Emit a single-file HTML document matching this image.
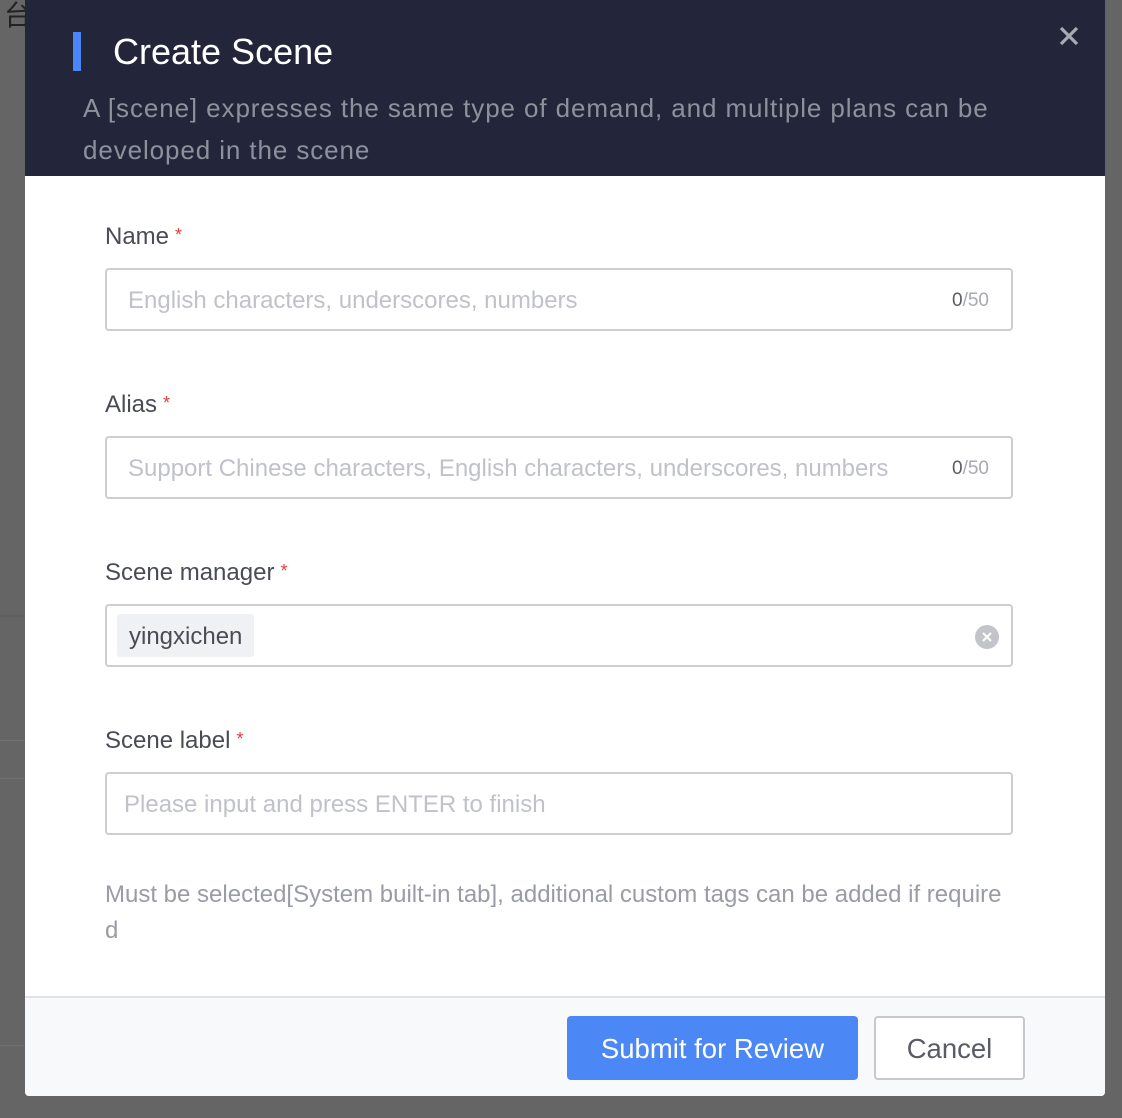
<!DOCTYPE html>
<html><head><meta charset="utf-8"><style>
*{margin:0;padding:0;box-sizing:border-box}
body{width:1122px;height:1118px;overflow:hidden;background:#656565;font-family:"Liberation Sans","Noto Sans CJK SC",sans-serif;position:relative}
.bgline{position:absolute;left:0;width:25px;height:1px;background:#707070}
.modal{position:absolute;left:25px;top:0;width:1080px;height:1096px;background:#fff;border-radius:0 0 4px 4px;overflow:hidden}
.head{position:absolute;left:0;top:0;width:1080px;height:176px;background:#23263a}
.bar{position:absolute;left:48px;top:32px;width:8px;height:39px;background:#4a86f5}
.title{position:absolute;left:88px;top:30px;font-size:36px;color:#fff;line-height:44px}
.sub{position:absolute;left:58px;top:87px;width:1000px;font-size:26px;letter-spacing:0.9px;line-height:42px;color:#8e909c;white-space:nowrap}
.close{position:absolute;left:1034px;top:26px}
.lbl{position:absolute;left:80px;font-size:24px;color:#4a4c55}
.lbl span{color:#e0403a;font-size:18px;margin-left:6px;vertical-align:3px}
.inp{position:absolute;left:80px;width:908px;height:63px;border:2px solid #cdced3;border-radius:4px;font-size:24px;color:#c0c2c8;line-height:61px;padding-left:21px}
.cnt{position:absolute;right:22px;top:0;font-size:19px;color:#a8aab1}
.cnt b{font-weight:normal;color:#5a5c64}
.tag{position:absolute;left:10px;top:8px;width:137px;height:43px;background:#f0f1f4;border-radius:3px;color:#4a4c55;font-size:24px;line-height:45px;padding-left:12px}
.help{position:absolute;left:80px;top:877px;width:960px;font-size:24px;line-height:36px;color:#9a9ca5;white-space:nowrap}
.foot{position:absolute;left:0;top:996px;width:1080px;height:100px;background:#f8f9fb;border-top:2px solid #e1e3e8}
.btn{position:absolute;top:18px;height:64px;border-radius:4px;font-size:27.5px;line-height:65px;text-align:center}
</style></head><body>
<div style="position:absolute;left:4px;top:-6px;font-size:28px;color:#222;font-family:'Noto Sans CJK SC',sans-serif">台</div>
<div class="bgline" style="top:615px;background:#5f6064;height:2px"></div>
<div class="bgline" style="top:740px"></div>
<div class="bgline" style="top:778px"></div>
<div class="bgline" style="top:1045px"></div>
<div class="modal">
 <div class="head">
  <div class="bar"></div>
  <div class="title">Create Scene</div>
  <div class="sub">A [scene] expresses the same type of demand, and multiple plans can be<br>developed in the scene</div>
  <svg class="close" width="20" height="20" viewBox="0 0 20 20"><path d="M2 2L18 18M18 2L2 18" stroke="#a9abb4" stroke-width="3.2"/></svg>
 </div>
 <div class="lbl" style="top:223px">Name<span>*</span></div>
 <div class="inp" style="top:268px">English characters, underscores, numbers<div class="cnt"><b>0</b>/50</div></div>
 <div class="lbl" style="top:391px">Alias<span>*</span></div>
 <div class="inp" style="top:436px">Support Chinese characters, English characters, underscores, numbers<div class="cnt"><b>0</b>/50</div></div>
 <div class="lbl" style="top:559px">Scene manager<span>*</span></div>
 <div class="inp" style="top:604px"><div class="tag">yingxichen</div>
  <svg style="position:absolute;left:868px;top:19px" width="24" height="24" viewBox="0 0 24 24"><circle cx="12" cy="12" r="12" fill="#c2c4ca"/><path d="M8 8L16 16M16 8L8 16" stroke="#fff" stroke-width="2"/></svg></div>
 <div class="lbl" style="top:727px">Scene label<span>*</span></div>
 <div class="inp" style="top:772px;padding-left:17px">Please input and press ENTER to finish</div>
 <div class="help">Must be selected[System built-in tab], additional custom tags can be added if require<br>d</div>
 <div class="foot">
  <div class="btn" style="left:542px;width:291px;background:#4b88f5;color:#fff">Submit for Review</div>
  <div class="btn" style="left:849px;width:151px;background:#fff;border:2px solid #c6c8cd;color:#5a5c64;line-height:61px">Cancel</div>
 </div>
</div>
</body></html>
